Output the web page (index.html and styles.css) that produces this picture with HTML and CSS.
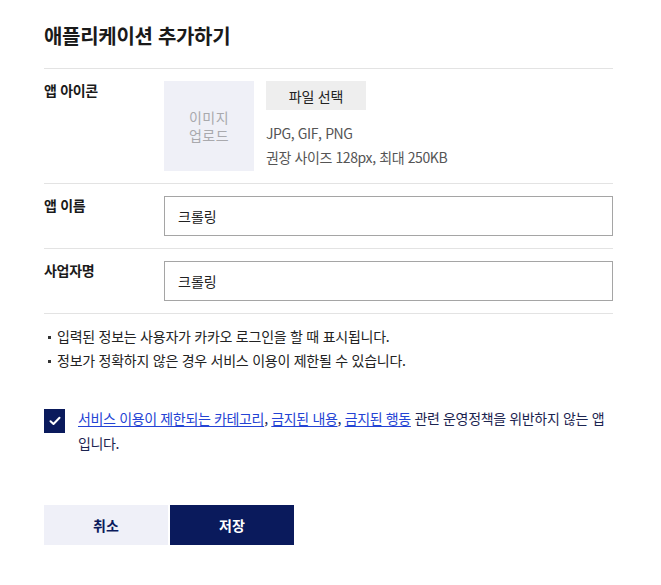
FILE: index.html
```html
<!DOCTYPE html>
<html lang="ko">
<head>
<meta charset="utf-8">
<link rel="stylesheet" href="styles.css">
</head>
<body>
<div class="page">
  <h1 class="title">애플리케이션 추가하기</h1>

  <div class="row">
    <div class="label">앱 아이콘</div>
    <div class="field icon-field">
      <div class="icon-box">이미지<br>업로드</div>
      <div class="icon-info">
        <button class="file-btn" type="button">파일 선택</button>
        <p class="hint">JPG, GIF, PNG</p>
        <p class="hint">권장 사이즈 128px, 최대 250KB</p>
      </div>
    </div>
  </div>

  <div class="row">
    <div class="label">앱 이름</div>
    <div class="field"><div class="input">크롤링</div></div>
  </div>

  <div class="row">
    <div class="label">사업자명</div>
    <div class="field"><div class="input">크롤링</div></div>
  </div>

  <ul class="notes">
    <li>입력된 정보는 사용자가 카카오 로그인을 할 때 표시됩니다.</li>
    <li>정보가 정확하지 않은 경우 서비스 이용이 제한될 수 있습니다.</li>
  </ul>

  <div class="agree">
    <span class="checkbox">
      <svg width="12" height="10" viewBox="0 0 12 10"><path d="M1.5 5.2 L4.5 8 L10.5 1.8" fill="none" stroke="#fff" stroke-width="2" stroke-linecap="round" stroke-linejoin="round"/></svg>
    </span>
    <p class="agree-text"><a href="#">서비스 이용이 제한되는 카테고리</a>, <a href="#">금지된 내용</a>, <a href="#">금지된 행동</a> 관련 운영정책을 위반하지 않는 앱<br>입니다.</p>
  </div>

  <div class="actions">
    <button class="btn btn-cancel" type="button">취소</button>
    <button class="btn btn-save" type="button">저장</button>
  </div>
</div>
</body>
</html>
```

FILE: styles.css
```css
* { box-sizing: border-box; }
body {
  margin: 0;
  background: #fff;
  font-family: "Noto Sans CJK KR", "Noto Sans", sans-serif;
  color: #222;
}
.page {
  width: 569px;
  margin-left: 44px;
}
.title {
  margin: 0;
  padding: 20px 0 16px;
  font-size: 20px;
  line-height: 32px;
  font-weight: 700;
  color: #1a1a1a;
  letter-spacing: -0.3px;
  border-bottom: 1px solid #e3e3e3;
}
.row {
  display: flex;
  padding: 12px 0;
  border-bottom: 1px solid #e3e3e3;
}
.label {
  width: 120px;
  font-size: 14px;
  line-height: 18px;
  font-weight: 700;
  color: #1a1a1a;
  letter-spacing: -0.3px;
}
.field { flex: 1; }
.icon-field {
  display: flex;
  gap: 12px;
}
.icon-box {
  width: 90px;
  height: 90px;
  background: #eff0f7;
  color: #a9a9ad;
  font-size: 14px;
  line-height: 18px;
  display: flex;
  align-items: center;
  justify-content: center;
  text-align: center;
  letter-spacing: 0.5px;
}
.icon-info {
  display: flex;
  flex-direction: column;
  align-items: flex-start;
}
.file-btn {
  width: 100px;
  height: 29px;
  border: 0;
  background: #eeeeee;
  font-family: inherit;
  font-size: 14px;
  color: #222;
  padding: 0;
  letter-spacing: -0.2px;
}
.hint {
  margin: 0;
  font-size: 14px;
  line-height: 24px;
  color: #555;
  letter-spacing: -0.4px;
}
.file-btn + .hint { margin-top: 11px; }
.input {
  height: 40px;
  border: 1px solid #a5a5a5;
  padding: 0 13px;
  font-size: 14px;
  line-height: 38px;
  color: #222;
}
.notes {
  list-style: none;
  margin: 0;
  padding: 10px 0 0 4px;
}
.notes li {
  position: relative;
  padding-left: 9px;
  font-size: 14px;
  line-height: 24px;
  color: #222;
  letter-spacing: -0.25px;
}
.notes li::before {
  content: "";
  position: absolute;
  left: 0;
  top: 12px;
  width: 3px;
  height: 3px;
  background: #333;
}
.agree {
  display: flex;
  align-items: flex-start;
  gap: 13px;
  margin-top: 37px;
}
.checkbox {
  flex: none;
  width: 21px;
  height: 24px;
  background: #0a1a5c;
  display: flex;
  align-items: center;
  justify-content: center;
}
.agree-text {
  margin: 0;
  font-size: 14px;
  line-height: 25px;
  color: #1b2450;
  letter-spacing: -0.35px;
  margin-top: -3px;
  white-space: nowrap;
}
.agree-text a {
  color: #2443d4;
  text-decoration: underline;
  text-underline-offset: 2px;
}
.actions {
  display: flex;
  gap: 2px;
  margin-top: 49px;
}
.btn {
  width: 124px;
  height: 40px;
  border: 0;
  font-family: inherit;
  font-size: 14px;
  font-weight: 700;
  padding: 0;
}
.btn-cancel { background: #eff0f8; color: #0a1a5c; }
.btn-save { background: #0a1a5c; color: #fff; }
```
